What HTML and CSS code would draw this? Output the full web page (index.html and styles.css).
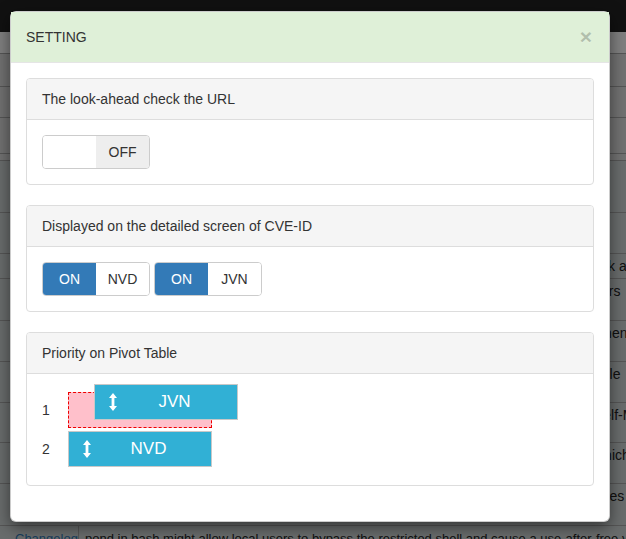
FILE: index.html
```html
<!DOCTYPE html>
<html>
<head>
<meta charset="utf-8">
<link rel="stylesheet" href="styles.css">
</head>
<body>
<div class="page">
  <div class="navbar"></div>
  <div class="bgtable">
    <div class="bgrow h21 plain"></div>
    <div class="bgrow h33"></div>
    <div class="bgrow h31"></div>
    <div class="bgrow h36"></div>
    <div class="bgrow h7"></div>
    <div class="bgrow h52 tint"></div>
    <div class="bgrow h41 tint"></div>
    <div class="bgrow h25 tint"><span class="bgcell">link and</span></div>
    <div class="bgrow h42 tint"><span class="bgcell">iters</span></div>
    <div class="bgrow h41 tint"><span class="bgcell">when</span></div>
    <div class="bgrow h41 tint"><span class="bgcell">ndle</span></div>
    <div class="bgrow h40 tint"><span class="bgcell">Self-M</span></div>
    <div class="bgrow h41 tint"><span class="bgcell">which</span></div>
    <div class="bgrow h42 tint"><span class="bgcell">ages</span></div>
    <div class="bgrow last tint">
      <span class="bglink">Changelog</span>
      <span class="bgtext">pond in bash might allow local users to bypass the restricted shell and cause a use-after-free via a crafted</span>
    </div>
  </div>
</div>
<div class="backdrop"></div>

<div class="modal">
  <div class="modal-header">
    <span class="modal-title">SETTING</span>
    <span class="close">&times;</span>
  </div>
  <div class="modal-body">
    <div class="panel">
      <div class="panel-heading">The look-ahead check the URL</div>
      <div class="panel-body">
        <div class="switch">
          <span class="sw-label"></span>
          <span class="sw-off">OFF</span>
        </div>
      </div>
    </div>

    <div class="panel">
      <div class="panel-heading">Displayed on the detailed screen of CVE-ID</div>
      <div class="panel-body switches">
        <div class="switch">
          <span class="sw-on">ON</span>
          <span class="sw-label">NVD</span>
        </div>
        <div class="switch">
          <span class="sw-on">ON</span>
          <span class="sw-label">JVN</span>
        </div>
      </div>
    </div>

    <div class="panel last-panel">
      <div class="panel-heading">Priority on Pivot Table</div>
      <div class="panel-body">
        <div class="prio-list">
          <div class="prio-row">
            <span class="prio-num">1</span>
            <div class="placeholder">
              <div class="item dragging">
                <svg class="arrow" width="8" height="18" viewBox="0 0 8 18"><path d="M4 0 L8 5 H5.4 V13 H8 L4 18 L0 13 H2.6 V5 H0 Z" fill="#fff"/></svg>
                <span class="item-text">JVN</span>
              </div>
            </div>
          </div>
          <div class="prio-row">
            <span class="prio-num">2</span>
            <div class="item">
              <svg class="arrow" width="8" height="18" viewBox="0 0 8 18"><path d="M4 0 L8 5 H5.4 V13 H8 L4 18 L0 13 H2.6 V5 H0 Z" fill="#fff"/></svg>
              <span class="item-text">NVD</span>
            </div>
          </div>
        </div>
      </div>
    </div>
  </div>
</div>
</body>
</html>
```
FILE: styles.css
```css
html, body {
  margin: 0;
  padding: 0;
}
body {
  width: 626px;
  height: 539px;
  overflow: hidden;
  position: relative;
  font-family: "Liberation Sans", Arial, Helvetica, sans-serif;
  font-size: 14px;
  line-height: 20px;
  color: #333;
  background: #fff;
}

/* background page */
.page {
  width: 626px;
}
.navbar {
  height: 32px;
  background: #222;
}
.bgtable {
  display: flex;
  flex-direction: column;
}
.bgrow {
  box-sizing: border-box;
  border-top: 1px solid #aaa;
  background: #e2e2e2;
  display: flex;
  font-size: 14px;
  line-height: 18px;
  color: #222;
  white-space: nowrap;
  overflow: hidden;
}
.bgrow.plain { border-top: 0; background: #fff; }
.bgrow.tint { background: #d2d8d8; }
.h7 { height: 7px; }
.h21 { height: 21px; }
.h25 { height: 25px; }
.h31 { height: 31px; }
.h33 { height: 33px; }
.h36 { height: 36px; }
.h40 { height: 40px; }
.h41 { height: 41px; }
.h42 { height: 42px; }
.h52 { height: 52px; }
.bgrow.last { height: 20px; }
.bgcell {
  margin-left: 594px;
  padding-top: 3px;
}
.bglink {
  flex: none;
  color: #337ab7;
  width: 63px;
  padding: 4px 0 0 15px;
  border-right: 1px solid #aaa;
  box-sizing: content-box;
  font-size: 13px;
}
.bgtext {
  padding: 4px 0 0 6px;
  font-size: 13px;
}
.backdrop {
  position: absolute;
  inset: 0;
  background: rgba(0, 0, 0, 0.5);
}

/* modal */
.modal {
  position: absolute;
  left: 10px;
  top: 11px;
  width: 600px;
  box-sizing: border-box;
  background: #fff;
  border: 1px solid rgba(0, 0, 0, 0.2);
  border-radius: 6px;
  box-shadow: 0 5px 15px rgba(0, 0, 0, 0.5);
}
.modal-header {
  background: #dff0d8;
  padding: 15px;
  border-bottom: 1px solid #e5e5e5;
  display: flex;
  justify-content: space-between;
  align-items: center;
  height: 20px;
}
.modal-title {
  font-size: 14px;
  line-height: 20px;
  color: #333;
}
.close {
  font-size: 21px;
  font-weight: bold;
  line-height: 1;
  color: #000;
  opacity: 0.2;
  text-shadow: 0 1px 0 #fff;
  margin-top: -2px;
  margin-right: 2px;
}
.modal-body {
  padding: 15px;
}
.panel {
  border: 1px solid #ddd;
  border-radius: 4px;
  margin-bottom: 20px;
  background: #fff;
}
.panel-heading {
  background: #f5f5f5;
  border-bottom: 1px solid #ddd;
  padding: 10px 15px;
  border-radius: 3px 3px 0 0;
}
.panel-body {
  padding: 15px;
}
.switches {
  display: flex;
  gap: 4px;
}
.switch {
  display: flex;
  width: 108px;
  height: 34px;
  box-sizing: border-box;
  border: 1px solid #ccc;
  border-radius: 4px;
  overflow: hidden;
}
.switch span {
  flex: 1;
  display: flex;
  align-items: center;
  justify-content: center;
  font-size: 14px;
}
.sw-label {
  background: #fff;
  color: #333;
}
.sw-off {
  background: #eee;
  color: #333;
}
.sw-on {
  background: #337ab7;
  color: #fff;
}

/* priority list */
.prio-list {
  display: flex;
  flex-direction: column;
  gap: 3px;
  padding: 3px 0;
}
.prio-row {
  display: flex;
  align-items: center;
}
.prio-num {
  width: 26px;
  font-size: 14px;
}
.placeholder {
  position: relative;
  width: 144px;
  height: 36px;
  box-sizing: border-box;
  background: #ffc0cb;
  border: 1px dashed #e00;
}
.item {
  width: 144px;
  height: 36px;
  box-sizing: border-box;
  background: #31b0d5;
  border: 1px solid #c8c8c8;
  display: flex;
  align-items: center;
  padding: 0 5px 0 14px;
  color: #fff;
}
.item.dragging {
  position: absolute;
  left: 25px;
  top: -9px;
}
.arrow {
  display: block;
  flex: none;
}
.item-text {
  flex: 1;
  text-align: center;
  font-size: 17px;
}
```
